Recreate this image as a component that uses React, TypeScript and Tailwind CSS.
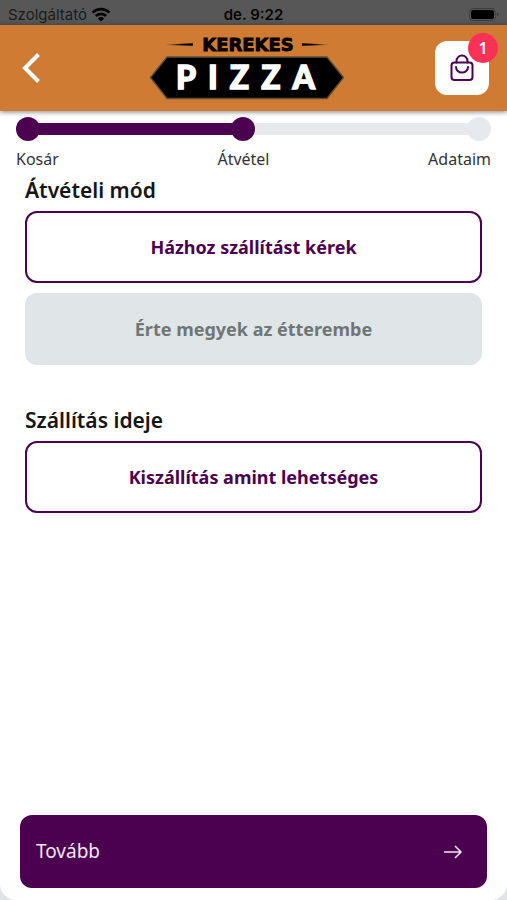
import { useState } from 'react';
import { clsx } from 'clsx';

type Method = 'delivery' | 'pickup';

const steps = [
  { label: 'Kosár', done: true, align: 'items-start' },
  { label: 'Átvétel', done: true, align: 'items-center' },
  { label: 'Adataim', done: false, align: 'items-end' },
];

function StatusBar() {
  return (
    <div className="grid h-[25px] grid-cols-3 items-center bg-[#575757] px-2 pt-1 font-[Inter,sans-serif] text-[15px] leading-5 text-[#1c1c1c]">
      <div className="flex items-center gap-1">
        <span>Szolgáltató</span>
        <svg className="h-4 w-5 shrink-0" viewBox="0 0 20 16" fill="none" stroke="#050505" strokeWidth="2.6">
          <path d="M1.6 5.6a12 12 0 0 1 16.8 0" />
          <path d="M4.8 9a7.4 7.4 0 0 1 10.4 0" />
          <path d="M10 14.6 6.9 11.4a4.4 4.4 0 0 1 6.2 0z" fill="#050505" stroke="none" />
        </svg>
      </div>
      <span className="text-center font-semibold text-[#050505]">de. 9:22</span>
      <svg className="h-[14px] w-[30px] justify-self-end" viewBox="0 0 30 14">
        <rect x="0.5" y="0.5" width="26" height="12" rx="4" fill="none" stroke="#3d3d3d" />
        <rect x="2" y="2" width="23" height="9" rx="2.5" fill="#000" />
        <path d="M28 4.5v4q1.6-.6 1.6-2t-1.6-2z" fill="#3d3d3d" />
      </svg>
    </div>
  );
}

function Logo() {
  return (
    <svg className="h-[66px] w-[200px]" viewBox="0 0 200 66" role="img" aria-label="Kerekes Pizza">
      <defs>
        <linearGradient id="fade-left" x1="0" x2="1">
          <stop offset="0" stopColor="#000" stopOpacity="0.1" />
          <stop offset="0.6" stopColor="#000" />
        </linearGradient>
        <linearGradient id="fade-right" x1="1" x2="0">
          <stop offset="0" stopColor="#000" stopOpacity="0.1" />
          <stop offset="0.6" stopColor="#000" />
        </linearGradient>
      </defs>
      <path d="M19 9.5 46 8.2v2.600L19 10z" fill="url(#fade-left)" />
      <path d="M181 9.5 155 8.2v2.600l26-.8z" fill="url(#fade-right)" />
      <text
        x="101"
        y="16"
        textAnchor="middle"
        className="font-['DejaVu_Sans',sans-serif] text-[18px] font-bold"
        fill="#000"
        stroke="#000"
        strokeWidth="0.8"
      >
        KEREKES
      </text>
      <path d="M20 22h160l16.5 20.5L180 63.5H20L3.5 42.5z" fill="#000" stroke="#5a5036" strokeWidth="1.4" strokeLinejoin="round" />
      <text
        x="29"
        y="54"
        className="font-[Lato,sans-serif] text-[32px] font-black tracking-[12px]"
        fill="#fff"
        stroke="#fff"
        strokeWidth="1.4"
      >
        PIZZA
      </text>
    </svg>
  );
}

function Header({ count }: { count: number }) {
  return (
    <header className="relative z-10 flex h-[86px] items-center justify-between bg-[#cf7b34] px-[18px] shadow-[0_1px_5px_rgba(0,0,0,0.5)]">
      <button type="button" aria-label="Vissza" className="flex h-[54px] w-10 items-center">
        <svg className="h-[30px] w-[26px]" viewBox="0 0 26 30" fill="none" stroke="#fff" strokeWidth="4">
          <path d="M20.5 1.5 7 15l13.5 13.5" />
        </svg>
      </button>
      <Logo />
      <button
        type="button"
        aria-label="Kosár megnyitása"
        className="relative flex h-[54px] w-[54px] items-center justify-center rounded-xl bg-white"
      >
        <svg className="h-7 w-6" viewBox="0 0 24 28" fill="none" stroke="#4b0150" strokeWidth="2" strokeLinecap="round">
          <rect x="1.5" y="8.5" width="21" height="17.5" rx="3" />
          <path d="M6.5 8.500V7a5.500 5.500 0 0 1 11 0v1.500" />
          <path d="M6 13a6 5.500 0 0 0 12 0" />
        </svg>
        <span className="absolute -top-2 -right-[9px] flex h-[30px] w-[30px] items-center justify-center rounded-full bg-[#fc3156] text-base font-semibold text-white">
          {count}
        </span>
      </button>
    </header>
  );
}

function Progress() {
  return (
    <div className="relative px-4 pt-[6px]">
      <div className="absolute inset-x-7 top-3 flex h-3 bg-[#e6eaec]">
        <div className="w-[48%] bg-[#4b0150]" />
      </div>
      <ol className="relative flex justify-between">
        {steps.map((step) => (
          <li key={step.label} className={clsx('flex flex-col gap-2 text-base leading-5 text-[#333]', step.align)}>
            <span className={clsx('h-6 w-6 rounded-full', step.done ? 'bg-[#4b0150]' : 'bg-[#e6eaec]')} />
            {step.label}
          </li>
        ))}
      </ol>
    </div>
  );
}

function OptionButton({ label, selected, onClick }: { label: string; selected: boolean; onClick?: () => void }) {
  return (
    <button
      type="button"
      aria-pressed={selected}
      onClick={onClick}
      className={clsx(
        'h-[72px] w-full rounded-xl border-2 text-lg font-bold',
        selected ? 'border-[#4b0150] bg-white text-[#4b0150]' : 'border-[#e0e5e7] bg-[#e0e5e7] text-[#707575]'
      )}
    >
      {label}
    </button>
  );
}

export default function App() {
  const [method, setMethod] = useState<Method>('delivery');

  return (
    <div className="min-h-screen bg-[#dfe4e6] font-['Noto_Sans','Open_Sans',sans-serif]">
      <div className="flex min-h-screen flex-col rounded-b-2xl bg-white">
        <StatusBar />
        <Header count={1} />
        <Progress />

        <main className="flex-1 px-[25px] pt-[7px]">
          <section>
            <h2 className="mb-[7px] text-[21px] leading-7 font-semibold text-[#151515]">Átvételi mód</h2>
            <div className="flex flex-col gap-[10px]">
              <OptionButton
                label="Házhoz szállítást kérek"
                selected={method === 'delivery'}
                onClick={() => setMethod('delivery')}
              />
              <OptionButton
                label="Érte megyek az étterembe"
                selected={method === 'pickup'}
                onClick={() => setMethod('pickup')}
              />
            </div>
          </section>

          <section className="mt-[41px]">
            <h2 className="mb-[7px] text-[21px] leading-7 font-semibold text-[#151515]">Szállítás ideje</h2>
            <OptionButton label="Kiszállítás amint lehetséges" selected />
          </section>
        </main>

        <footer className="px-5 pb-3">
          <button
            type="button"
            className="flex h-[73px] w-full items-center justify-between rounded-xl bg-[#4b0150] pr-6 pl-4 text-[19px] text-[#f3e6f4]"
          >
            Tovább
            <svg className="h-[14px] w-5" viewBox="0 0 20 14" fill="none" stroke="currentColor" strokeWidth="1.5">
              <path d="M1 7h17M12 1l6 6-6 6" />
            </svg>
          </button>
        </footer>
      </div>
    </div>
  );
}
